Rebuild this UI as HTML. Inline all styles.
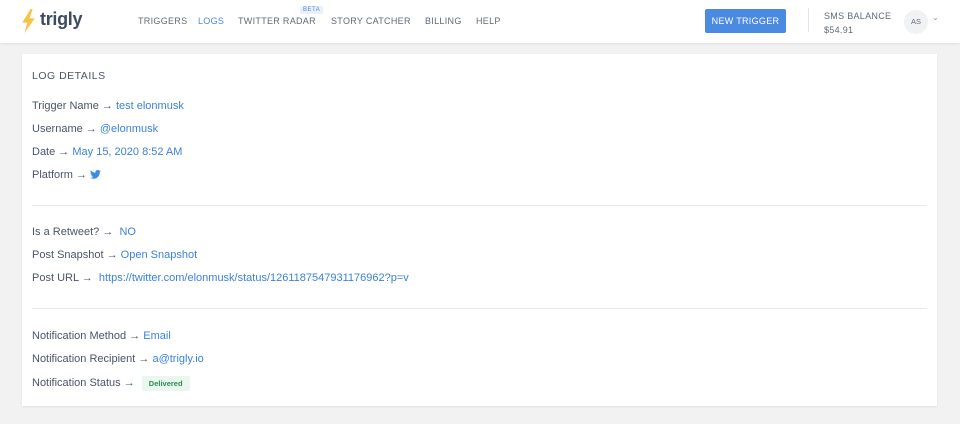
<!DOCTYPE html>
<html><head><meta charset="utf-8"><style>
*{margin:0;padding:0;box-sizing:border-box}
body{width:960px;height:424px;background:#f2f2f3;font-family:"Liberation Sans",sans-serif;color:#4a5568;position:relative;overflow:hidden}
.hdr{position:absolute;left:0;top:0;width:960px;height:43px;background:#fff;box-shadow:0 1px 3px rgba(0,0,0,.08)}
.nav{position:absolute;top:16px;font-size:9px;letter-spacing:.3px;color:#5f6b7d;white-space:nowrap}
.card{position:absolute;left:22px;top:54px;width:915px;height:352px;background:#fff;box-shadow:0 1px 2px rgba(0,0,0,.08)}
.row{position:absolute;left:10px;font-size:11px;color:#4a5568;white-space:nowrap}
.row b{font-weight:normal;color:#3b82dc}
.hr{position:absolute;left:10px;width:895px;height:1px;background:#e6e8eb}
</style></head><body>
<div class="hdr">
<svg style="position:absolute;left:21px;top:9px" width="15" height="24" viewBox="0 0 14 23"><path d="M9 0L1 13h5l-3 10 10-14H8l3-9z" fill="#f6c343"/></svg>
<div style="position:absolute;left:40px;top:9px;font-size:18px;font-weight:bold;color:#3d4a63;letter-spacing:-.3px">trigly</div>
<div class="nav" style="left:138px">TRIGGERS</div>
<div class="nav" style="left:198px;color:#4a8ae0">LOGS</div>
<div class="nav" style="left:238px">TWITTER RADAR</div>
<div style="position:absolute;left:300px;top:6px;font-size:6px;color:#4a8ae0;background:#e8f1fc;padding:1px 3px;border-radius:2px;letter-spacing:.5px">BETA</div>
<div class="nav" style="left:331px">STORY CATCHER</div>
<div class="nav" style="left:425px">BILLING</div>
<div class="nav" style="left:476px">HELP</div>
<div style="position:absolute;left:705px;top:9px;width:81px;height:24px;background:#4a8ae0;border-radius:2px;color:#fff;font-size:9px;text-align:center;line-height:25px;letter-spacing:.3px">NEW TRIGGER</div>
<div style="position:absolute;left:808px;top:8px;width:1px;height:24px;background:#e2e4e8"></div>
<div style="position:absolute;left:824px;top:9px;font-size:9px;color:#5f6b7d;letter-spacing:.3px;line-height:14px">SMS BALANCE<br>$54.91</div>
<div style="position:absolute;left:904px;top:10px;width:24px;height:24px;border-radius:50%;background:#f1f2f4;font-size:7.5px;color:#5f6b7d;text-align:center;line-height:24px">AS</div>
<div style="position:absolute;left:932px;top:13px;font-size:8px;color:#8a94a4">⌄</div>
</div>
<div class="card">
<div class="row" style="top:16px;font-size:10.5px;letter-spacing:.5px">LOG DETAILS</div>
<div class="row" style="top:46px">Trigger Name → <b>test elonmusk</b></div>
<div class="row" style="top:69px">Username → <b>@elonmusk</b></div>
<div class="row" style="top:92px">Date → <b>May 15, 2020 8:52 AM</b></div>
<div class="row" style="top:115px">Platform → <svg width="11" height="9" viewBox="0 0 24 20" style="vertical-align:-1px"><path d="M24 2.4a10 10 0 0 1-2.8.8A5 5 0 0 0 23.3.4a10 10 0 0 1-3.1 1.2A4.9 4.9 0 0 0 11.8 6 14 14 0 0 1 1.7.9a4.9 4.9 0 0 0 1.5 6.6A4.9 4.9 0 0 1 1 6.9a4.9 4.9 0 0 0 3.9 4.9 5 5 0 0 1-2.2.1 4.9 4.9 0 0 0 4.6 3.4A9.9 9.9 0 0 1 0 17.3 14 14 0 0 0 7.5 19.5c9 0 14-7.5 14-14v-.6A10 10 0 0 0 24 2.4z" fill="#3b8de3"/></svg></div>
<div class="hr" style="top:151px"></div>
<div class="row" style="top:172px">Is a Retweet? → &nbsp;<b>NO</b></div>
<div class="row" style="top:195px">Post Snapshot → <b>Open Snapshot</b></div>
<div class="row" style="top:218px">Post URL → &nbsp;<b>https://twitter.com/elonmusk/status/1261187547931176962?p=v</b></div>
<div class="hr" style="top:254px"></div>
<div class="row" style="top:276px">Notification Method → <b>Email</b></div>
<div class="row" style="top:299px">Notification Recipient → <b>a@trigly.io</b></div>
<div class="row" style="top:322px">Notification Status → <span style="display:inline-block;margin-left:4px;background:#e9f7ee;color:#2f8a4f;font-size:7.5px;padding:3px 7px;border-radius:2px;font-weight:bold">Delivered</span></div>
</div>
</body></html>
